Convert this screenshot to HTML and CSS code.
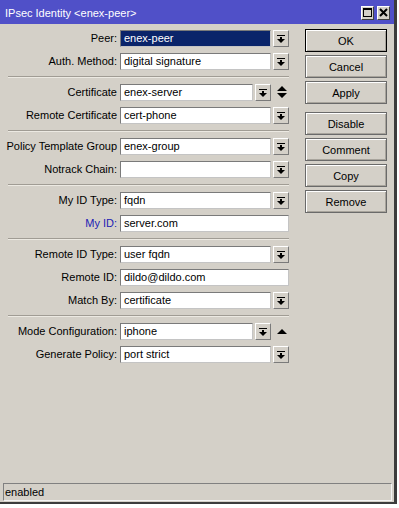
FILE: index.html
```html
<!DOCTYPE html>
<html>
<head>
<meta charset="utf-8">
<link rel="stylesheet" href="styles.css">
</head>
<body>
<div class="window">
  <div class="titlebar">
    <span class="title">IPsec Identity &lt;enex-peer&gt;</span>
    <div class="tb-buttons">
      <span class="tb-btn"><svg width="11" height="12" viewBox="0 0 11 12"><rect x="1.5" y="1.5" width="8" height="8" fill="none" stroke="#000" stroke-width="1"/><rect x="1" y="1" width="9" height="2" fill="#000"/></svg></span>
      <span class="tb-btn"><svg width="11" height="12" viewBox="0 0 11 12"><path d="M2 2 L9 9 M9 2 L2 9" stroke="#000" stroke-width="2"/></svg></span>
    </div>
  </div>
  <div class="content">
    <div class="form">
      <div class="row"><span class="label">Peer:</span><span class="input selected">enex-peer</span><span class="dd"><svg width="14" height="15" viewBox="0 0 14 15"><rect x="3" y="4" width="8" height="1" fill="#000"/><path d="M6 6 H8 V8 H11 L7 12 L3 8 H6 Z" fill="#000"/></svg></span></div>
      <div class="row"><span class="label">Auth. Method:</span><span class="input">digital signature</span><span class="dd"><svg width="14" height="15" viewBox="0 0 14 15"><rect x="3" y="4" width="8" height="1" fill="#000"/><path d="M6 6 H8 V8 H11 L7 12 L3 8 H6 Z" fill="#000"/></svg></span></div>
      <div class="sep"></div>
      <div class="row"><span class="label">Certificate</span><span class="input short">enex-server</span><span class="dd"><svg width="14" height="15" viewBox="0 0 14 15"><rect x="3" y="4" width="8" height="1" fill="#000"/><path d="M6 6 H8 V8 H11 L7 12 L3 8 H6 Z" fill="#000"/></svg></span><span class="arrows"><svg width="18" height="17" viewBox="0 0 18 17"><path d="M6 7 H16 L11 2 Z M6 9 H16 L11 14 Z" fill="#000"/></svg></span></div>
      <div class="row"><span class="label">Remote Certificate</span><span class="input">cert-phone</span><span class="dd"><svg width="14" height="15" viewBox="0 0 14 15"><rect x="3" y="4" width="8" height="1" fill="#000"/><path d="M6 6 H8 V8 H11 L7 12 L3 8 H6 Z" fill="#000"/></svg></span></div>
      <div class="sep"></div>
      <div class="row"><span class="label">Policy Template Group</span><span class="input">enex-group</span><span class="dd"><svg width="14" height="15" viewBox="0 0 14 15"><rect x="3" y="4" width="8" height="1" fill="#000"/><path d="M6 6 H8 V8 H11 L7 12 L3 8 H6 Z" fill="#000"/></svg></span></div>
      <div class="row"><span class="label">Notrack Chain:</span><span class="input"></span><span class="dd"><svg width="14" height="15" viewBox="0 0 14 15"><rect x="3" y="4" width="8" height="1" fill="#000"/><path d="M6 6 H8 V8 H11 L7 12 L3 8 H6 Z" fill="#000"/></svg></span></div>
      <div class="sep"></div>
      <div class="row"><span class="label">My ID Type:</span><span class="input">fqdn</span><span class="dd"><svg width="14" height="15" viewBox="0 0 14 15"><rect x="3" y="4" width="8" height="1" fill="#000"/><path d="M6 6 H8 V8 H11 L7 12 L3 8 H6 Z" fill="#000"/></svg></span></div>
      <div class="row"><span class="label blue">My ID:</span><span class="input wide">server.com</span></div>
      <div class="sep"></div>
      <div class="row"><span class="label">Remote ID Type:</span><span class="input">user fqdn</span><span class="dd"><svg width="14" height="15" viewBox="0 0 14 15"><rect x="3" y="4" width="8" height="1" fill="#000"/><path d="M6 6 H8 V8 H11 L7 12 L3 8 H6 Z" fill="#000"/></svg></span></div>
      <div class="row"><span class="label">Remote ID:</span><span class="input wide">dildo@dildo.com</span></div>
      <div class="row"><span class="label">Match By:</span><span class="input">certificate</span><span class="dd"><svg width="14" height="15" viewBox="0 0 14 15"><rect x="3" y="4" width="8" height="1" fill="#000"/><path d="M6 6 H8 V8 H11 L7 12 L3 8 H6 Z" fill="#000"/></svg></span></div>
      <div class="sep"></div>
      <div class="row"><span class="label">Mode Configuration:</span><span class="input short">iphone</span><span class="dd"><svg width="14" height="15" viewBox="0 0 14 15"><rect x="3" y="4" width="8" height="1" fill="#000"/><path d="M6 6 H8 V8 H11 L7 12 L3 8 H6 Z" fill="#000"/></svg></span><span class="arrows"><svg width="18" height="17" viewBox="0 0 18 17"><path d="M6 11 H16 L11 6 Z" fill="#000"/></svg></span></div>
      <div class="row"><span class="label">Generate Policy:</span><span class="input">port strict</span><span class="dd"><svg width="14" height="15" viewBox="0 0 14 15"><rect x="3" y="4" width="8" height="1" fill="#000"/><path d="M6 6 H8 V8 H11 L7 12 L3 8 H6 Z" fill="#000"/></svg></span></div>
    </div>
    <div class="buttons">
      <div class="btn default">OK</div>
      <div class="btn">Cancel</div>
      <div class="btn">Apply</div>
      <div class="btn gap">Disable</div>
      <div class="btn">Comment</div>
      <div class="btn">Copy</div>
      <div class="btn">Remove</div>
    </div>
  </div>
  <div class="status">enabled</div>
</div>
</body>
</html>
```

FILE: styles.css
```css
html, body {
  margin: 0;
  padding: 0;
  background: #ffffff;
}
body {
  font-family: "Liberation Sans", Arial, sans-serif;
  font-size: 11px;
  color: #000;
}
.window {
  width: 394px;
  height: 502px;
  background: #d4d0c8;
  border-right: 3px solid #3c3c3c;
  border-bottom: 2px solid #3c3c3c;
  display: flex;
  flex-direction: column;
}
.titlebar {
  height: 24px;
  background: #5050c8;
  display: flex;
  align-items: center;
  justify-content: space-between;
  padding: 0 4px 0 5px;
  flex: none;
}
.title {
  color: #fff;
  font-size: 11px;
  padding-top: 2px;
}
.tb-buttons {
  display: flex;
  gap: 3px;
  padding-top: 1px;
}
.tb-btn {
  width: 11px;
  height: 12px;
  background: #d4d0c8;
  border: 1px solid;
  border-color: #fff #404040 #404040 #fff;
  display: flex;
}
.content {
  flex: 1;
  display: flex;
  gap: 16px;
  padding-top: 5px;
}
.form {
  width: 289px;
  display: flex;
  flex-direction: column;
  padding-top: 1px;
}
.row {
  display: flex;
  align-items: center;
  height: 17px;
  margin-bottom: 6px;
}
.label {
  width: 117px;
  text-align: right;
  margin-right: 3px;
  white-space: nowrap;
  line-height: 17px;
}
.label.blue {
  color: #1c1cb4;
}
.input {
  box-sizing: border-box;
  width: 151px;
  height: 17px;
  background: #fff;
  border: 1px solid;
  border-color: #7a7a7a #c4c4c4 #c4c4c4 #7a7a7a;
  padding-left: 3px;
  line-height: 15px;
  white-space: nowrap;
  overflow: hidden;
}
.input.short {
  width: 133px;
}
.input.wide {
  width: 169px;
}
.input.selected {
  background: #0a246a;
  color: #fff;
}
.dd {
  box-sizing: border-box;
  width: 16px;
  height: 17px;
  margin-left: 2px;
  background: #d4d0c8;
  border: 1px solid;
  border-color: #fff #7a7a7a #7a7a7a #fff;
  display: flex;
}
.arrows {
  width: 18px;
  height: 17px;
  display: flex;
}
.sep {
  margin: 0 0 7px 8px;
  width: 281px;
  height: 1px;
  background: #a09c94;
  box-shadow: 0 1px 0 #ece9e2;
}
.buttons {
  width: 82px;
  display: flex;
  flex-direction: column;
  gap: 3px;
}
.btn {
  box-sizing: border-box;
  height: 23px;
  border: 1px solid #6a6a6a;
  box-shadow: inset 1px 1px 0 #fff, inset -1px -1px 0 #a8a49c;
  display: flex;
  align-items: center;
  justify-content: center;
}
.btn.default {
  border-color: #000;
}
.btn.gap {
  margin-top: 5px;
}
.status {
  box-sizing: border-box;
  height: 18px;
  margin: 0 2px 1px 3px;
  border: 1px solid;
  border-color: #808080 #f4f4f4 #f4f4f4 #808080;
  padding-left: 1px;
  line-height: 16px;
  flex: none;
}
```
